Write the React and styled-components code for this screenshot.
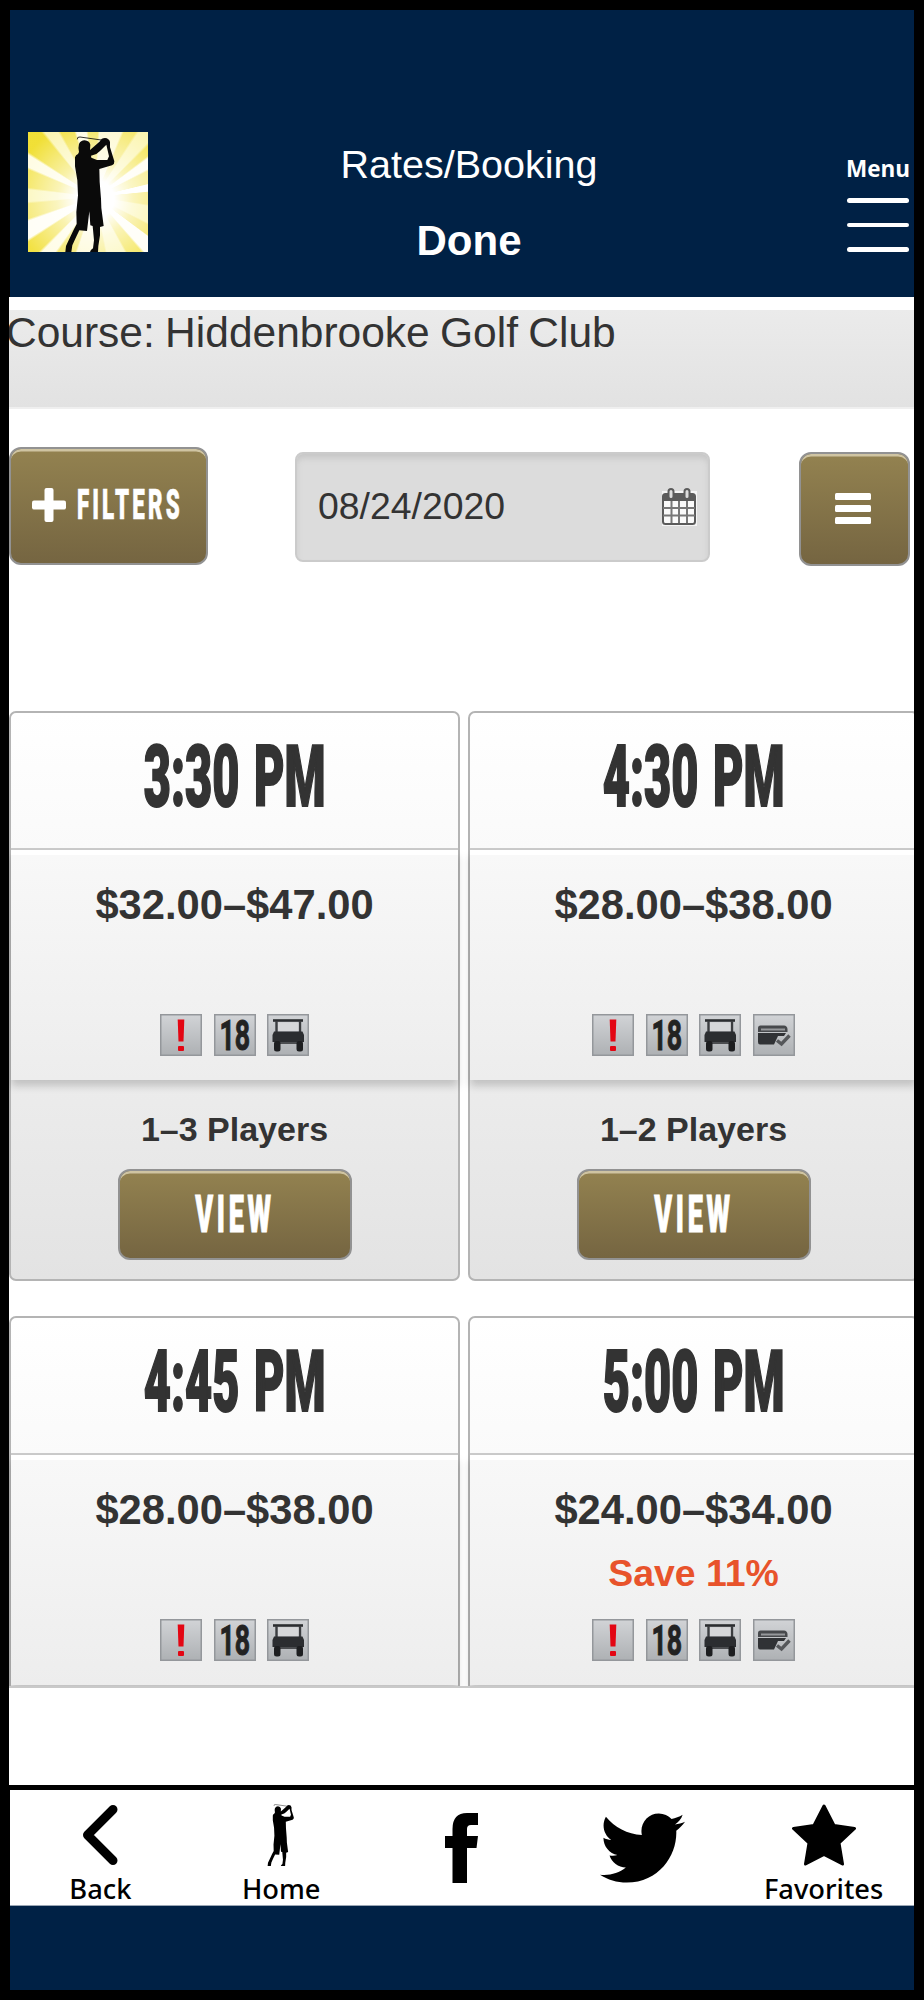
import React from 'react';
import styled, { createGlobalStyle } from 'styled-components';
import { FaTwitter } from 'react-icons/fa';

const teeTimes = [
    { id: 1, time: '3:30 PM', price: '$32.00–$47.00', players: '1–3 Players', card: false },
    { id: 2, time: '4:30 PM', price: '$28.00–$38.00', players: '1–2 Players', card: true },
    { id: 3, time: '4:45 PM', price: '$28.00–$38.00', card: false },
    { id: 4, time: '5:00 PM', price: '$24.00–$34.00', save: 'Save 11%', card: true },
];

function Golfer() {
    return (
        <g>
            <path d="M148 22 Q147 14 156 15 L220 24" fill="none" stroke="currentColor" strokeWidth="2.5" />
            <path d="M153 60 Q150 45 153 36 Q158 25 170 25 Q184 26 187 38 L186 54 L199 43 L216 28 Q220 18 231 18 Q243 19 246 30 L246 46 L259 88 Q260 96 252 100 L214 111 L215 150 L219 200 L220 228 L227 282 L216 285 L216 310 L211 342 L210 360 L186 360 Q187 354 195 349 L198 325 L194 282 L187 280 L184 238 L177 297 L154 295 L143 318 L133 340 L130 360 L112 360 L114 342 L122 325 L137 293 L146 276 L145 240 L150 190 L148 145 L141 103 L141 76 Q143 69 150 66 Z M189 71 L190 77 L207 84 L238 84 L243 73 L235 38 L216 57 L205 66 Z" fillRule="evenodd" fill="currentColor" />
        </g>
    );
}

function CalendarIcon() {
    return (
        <svg width="36" height="40" viewBox="0 0 36 40">
            <rect x="1" y="4" width="35" height="35" fill="#f5f5f5" />
            <rect x="2" y="7" width="32" height="30" rx="2.5" fill="#fafafa" stroke="#5b5b5b" strokeWidth="2" />
            <rect x="2" y="7" width="32" height="7" fill="#5b5b5b" />
            <path d="M10.5 14 V36 M18 14 V36 M26 14 V36 M2 21 H34 M2 28.5 H34" stroke="#777" strokeWidth="2" />
            <rect x="7.5" y="2" width="5" height="10" rx="2.5" fill="#ddd" stroke="#5b5b5b" strokeWidth="2" />
            <rect x="23.5" y="2" width="5" height="10" rx="2.5" fill="#ddd" stroke="#5b5b5b" strokeWidth="2" />
        </svg>
    );
}

function CartIcon() {
    return (
        <svg width="42" height="42" viewBox="0 0 42 42">
            <path d="M6 6.5 H36" stroke="#2b2d30" strokeWidth="2.6" />
            <path d="M9.5 7 V19 M33 7 V19" stroke="#3b3d40" strokeWidth="2.4" />
            <path d="M11 8.5 H31.5 V17 H11 Z" fill="#d6d7d9" />
            <path d="M7 17.5 H35.5 L37 21 V28 H5.5 V21 Z" fill="#2b2d30" />
            <path d="M9 29 H33" stroke="#4b4d50" strokeWidth="2" />
            <rect x="7" y="27" width="6.5" height="10.5" rx="2.5" fill="#1d1e20" />
            <rect x="29.5" y="27" width="6.5" height="10.5" rx="2.5" fill="#1d1e20" />
        </svg>
    );
}

function CreditIcon() {
    return (
        <svg width="42" height="42" viewBox="0 0 42 42">
            <path d="M5 18 V14 Q5 11.5 7.5 11.5 H31 Q34 11.5 34.5 15 V18 Z" fill="#47494c" />
            <path d="M8 15.5 H32" stroke="#96989b" strokeWidth="2" />
            <path d="M5 19 H33 L31 22 H25 L21 30.5 H7 Q5 30.5 5 28 Z" fill="#303235" />
            <path d="M24 26.5 L28.5 30 L36.5 21.5" fill="none" stroke="#55575a" strokeWidth="3.4" />
        </svg>
    );
}

function TeeTime({ item }) {
    return (
        <Card>
            <CardTime>
                <Condensed $size={84.5} $squeeze={0.555} $stroke={2}>{item.time}</Condensed>
            </CardTime>
            <CardRates>
                <Price>{item.price}</Price>
                <Save>{item.save}</Save>
                <Perks>
                    <Perk>
                        <svg width="42" height="42" viewBox="0 0 42 42">
                            <path d="M17.7 5.5 H24.3 L23.5 27.5 H18.5 Z" fill="#e30613" />
                            <rect x="18" y="32" width="6" height="5" rx="1" fill="#e30613" />
                        </svg>
                    </Perk>
                    <Perk><Holes>18</Holes></Perk>
                    <Perk><CartIcon /></Perk>
                    {item.card && <Perk><CreditIcon /></Perk>}
                </Perks>
            </CardRates>
            {item.players && (
                <CardFooter>
                    <Players>{item.players}</Players>
                    <GoldButton $width={234} $height={91}>
                        <Condensed $size={51} $squeeze={0.53} $spacing={7} $stroke={1}>VIEW</Condensed>
                    </GoldButton>
                </CardFooter>
            )}
        </Card>
    );
}

function App() {
    return (
        <Phone>
            <GlobalStyle />
            <Header>
                <Logo viewBox="0 0 360 360">
                    <Golfer />
                </Logo>
                <Titles>
                    <Title>Rates/Booking</Title>
                    <Done>Done</Done>
                </Titles>
                <MenuButton>
                    <span>Menu</span>
                    <MenuLine />
                    <MenuLine />
                    <MenuLine />
                </MenuButton>
            </Header>

            <Content>
                <CourseBar>Course: Hiddenbrooke Golf Club</CourseBar>
                <Toolbar>
                    <GoldButton $width={199} $height={118}>
                        <FilterLabel>
                            <svg width="34" height="34" viewBox="0 0 34 34">
                                <rect y="12.5" width="34" height="9" rx="2" fill="#fff" />
                                <rect x="12.5" width="9" height="34" rx="2" fill="#fff" />
                            </svg>
                            <FilterText>
                                <Condensed $size={43} $squeeze={0.52} $spacing={6} $stroke={0.6}>FILTERS</Condensed>
                            </FilterText>
                        </FilterLabel>
                    </GoldButton>
                    <DateField>
                        <span>08/24/2020</span>
                        <CalendarIcon />
                    </DateField>
                    <ListButton $width={111} $height={114}>
                        <svg width="36" height="32" viewBox="0 0 36 32">
                            <rect width="36" height="7" rx="1.5" fill="#fff" />
                            <rect y="12" width="36" height="7" rx="1.5" fill="#fff" />
                            <rect y="24" width="36" height="7" rx="1.5" fill="#fff" />
                        </svg>
                    </ListButton>
                </Toolbar>
                <Times>
                    {teeTimes.map((item) => (
                        <TeeTime key={item.id} item={item} />
                    ))}
                </Times>
            </Content>

            <BottomNav>
                <NavItem>
                    <svg width="40" height="62" viewBox="0 0 40 62">
                        <path d="M33 5.5 L7.5 31 L33 56.5" fill="none" stroke="#000" strokeWidth="9" strokeLinecap="round" strokeLinejoin="round" />
                    </svg>
                    <span>Back</span>
                </NavItem>
                <NavItem>
                    <svg width="28" height="62" viewBox="112 12 150 348">
                        <Golfer />
                    </svg>
                    <span>Home</span>
                </NavItem>
                <NavItem $social>
                    <svg width="33" height="70" viewBox="0 0 33 70">
                        <path d="M7.5 70 V35 H0 V23 H7.5 V16 Q7.5 0 22 0 H33 V12 H26 Q22 12 22 16 V23 H33 L31.5 35 H22 V70 Z" />
                    </svg>
                </NavItem>
                <NavItem $social>
                    <TwitterLogo viewBox="0 48 512 416" />
                </NavItem>
                <NavItem>
                    <svg width="66" height="62" viewBox="0 0 66 62">
                        <path d="M33 2 L43 21.5 L63.5 24.5 L48 39 L51.5 60 L33 50.5 L14.5 60 L18 39 L2.5 24.5 L23 21.5 Z" stroke="#000" strokeWidth="3" strokeLinejoin="round" />
                    </svg>
                    <span>Favorites</span>
                </NavItem>
            </BottomNav>
            <HomeArea />
        </Phone>
    );
}

const GlobalStyle = createGlobalStyle`
    * {
        box-sizing: border-box;
    }

    body {
        margin: 0;
        background: #000;
        font-family: "Liberation Sans", Arial, sans-serif;
        color: #333;
    }

    svg {
        display: block;
        flex: none;
    }
`;

const Phone = styled.div`
    display: flex;
    flex-direction: column;
    width: 924px;
    height: 2000px;
    padding: 10px 10px 10px 9px;
    background: #000;
`;

const Header = styled.header`
    display: flex;
    flex: none;
    height: 287px;
    margin-left: 1px;
    padding: 122px 5px 0 18px;
    background: #002145;
    color: #fff;
`;

const Logo = styled.svg`
    width: 120px;
    height: 120px;
    color: #0a0a0a;
    background:
        radial-gradient(circle at 56% 56%, #fff 0 20%, rgba(255, 255, 255, 0.6) 40%, rgba(255, 255, 255, 0.05) 85%),
        conic-gradient(from 8deg at 56% 54%,
            #fdf9cc 0 14deg, #f4e660 16deg 24deg, #fbf5ae 26deg 36deg, #f3e34a 38deg 44deg,
            #fffdf0 46deg 54deg, #f5e96e 56deg 68deg, #ffffff 69deg 76deg, #f4e455 77deg 90deg,
            #faf3a0 92deg 108deg, #f3e250 110deg 118deg, #fffef4 119deg 130deg, #f3e34a 132deg 142deg,
            #fbf6b4 144deg 160deg, #f5e96e 162deg 172deg, #fdf9cc 174deg 190deg, #f2e03a 192deg 206deg,
            #fffce0 208deg 216deg, #f2e03a 218deg 228deg, #fffef4 230deg 242deg, #f4e660 244deg 256deg,
            #fbf6b4 258deg 268deg, #f3e34a 270deg 284deg, #fffce0 286deg 294deg, #f0de2c 296deg 312deg,
            #fbf5ae 314deg 322deg, #f2e03a 324deg 334deg, #fffce0 336deg 344deg, #f3e34a 346deg 354deg, #fdf9cc 356deg);
`;

const Titles = styled.div`
    display: flex;
    flex: 1;
    flex-direction: column;
    align-items: center;
    padding: 9px 57px 0 0;
`;

const Title = styled.h1`
    margin: 0;
    font-size: 39.5px;
    font-weight: 400;
    line-height: 46px;
`;

const Done = styled.div`
    margin-top: 29px;
    font-size: 42px;
    font-weight: 700;
    line-height: 49px;
`;

const MenuButton = styled.div`
    display: flex;
    flex-direction: column;
    align-items: center;
    gap: 20px;
    width: 62px;
    padding-top: 20px;
    font-family: "Open Sans", "Noto Sans", sans-serif;
    font-size: 22.5px;
    font-weight: 700;

    span {
        height: 26px;
        line-height: 33px;
        white-space: nowrap;
    }
`;

const MenuLine = styled.i`
    flex: none;
    width: 62px;
    height: 4.5px;
    border-radius: 3px;
    background: #fff;
`;

const Content = styled.main`
    flex: none;
    height: 1488px;
    padding-top: 13px;
    overflow: hidden;
    background: #fff;
`;

const CourseBar = styled.div`
    height: 99px;
    border-bottom: 2px solid #efefef;
    background: linear-gradient(#ebebeb, #e2e2e2);
    font-size: 42.5px;
    line-height: 46px;
    text-indent: -3px;
    word-spacing: -1.5px;
    white-space: nowrap;
`;

const Toolbar = styled.div`
    display: flex;
    align-items: flex-start;
    justify-content: space-between;
    height: 302px;
    padding: 37.5px 4px 0 0;
`;

const GoldButton = styled.div`
    display: flex;
    align-items: center;
    justify-content: center;
    flex: none;
    width: ${(props) => props.$width}px;
    height: ${(props) => props.$height}px;
    border: 2px solid #929292;
    border-radius: 12px;
    background: linear-gradient(#938250, #756541);
    box-shadow: inset 0 3px 0 -0.5px #cfc4a2;
    color: #fff;
`;

const ListButton = styled(GoldButton)`
    margin-top: 5px;
    padding-right: 4px;
`;

const FilterLabel = styled.div`
    display: flex;
    align-items: center;
    gap: 12px;
    padding: 0 3px 2px 0;
`;

const FilterText = styled.div`
    display: flex;
    justify-content: center;
    width: 104px;
`;

/* tall narrow display lettering */
const Condensed = styled.span`
    flex: none;
    font-family: Roboto, "Liberation Sans", sans-serif;
    font-size: ${(props) => props.$size}px;
    font-weight: 900;
    letter-spacing: ${(props) => props.$spacing || 0}px;
    line-height: 1;
    white-space: nowrap;
    -webkit-text-stroke: ${(props) => props.$stroke}px currentColor;
    transform: scaleX(${(props) => props.$squeeze});
`;

const DateField = styled.div`
    display: flex;
    align-items: center;
    justify-content: space-between;
    width: 415px;
    height: 110px;
    margin: 5px 2px 0 0;
    padding: 0 11px 0 21px;
    border: 2px solid #cbcbcb;
    border-radius: 8px;
    background: #dcdcdc;
    box-shadow: inset 0 5px 6px -1px #c6c6c6;
    font-size: 37.4px;
`;

const Times = styled.section`
    display: grid;
    grid-template-columns: 451px 451px;
    gap: 35px 8px;
    height: 977px;
    overflow: hidden;
    border-bottom: 2px solid #c9c9c9;
`;

const Card = styled.article`
    height: 570px;
    border: 2px solid #b4b4b4;
    border-radius: 7px;
    background: linear-gradient(#fff, #fafafa 136px, #ececec 366px, #e3e3e3);
`;

const CardTime = styled.div`
    display: flex;
    align-items: center;
    justify-content: center;
    height: 137px;
    padding-bottom: 5px;
    border-bottom: 2px solid #cbcbcb;
    color: #333;
    word-spacing: 5px;
`;

const CardRates = styled.div`
    display: flex;
    flex-direction: column;
    align-items: center;
    height: 230px;
    border-top: 5px solid #fff;
    background: linear-gradient(#f8f8f8, #ededed);
    box-shadow: 0 6px 8px rgba(0, 0, 0, 0.18);
    font-weight: 700;
`;

const Price = styled.div`
    margin-top: 26px;
    font-size: 41.7px;
    line-height: 48px;
`;

const Save = styled.div`
    height: 44px;
    margin-top: 18px;
    color: #e8532b;
    font-size: 37.4px;
    line-height: 42px;
`;

const Perks = styled.div`
    display: flex;
    gap: 11.7px;
    margin-top: 22.5px;
`;

const Perk = styled.div`
    display: flex;
    align-items: center;
    justify-content: center;
    width: 42px;
    height: 42px;
    background: linear-gradient(#d2d4d7, #adb0b3);
    box-shadow: inset 0 0 0 1.5px #94979b;
`;

const Holes = styled.span`
    flex: none;
    color: #222;
    font-family: Roboto, sans-serif;
    font-size: 43px;
    font-weight: 700;
    line-height: 42px;
    -webkit-text-stroke: 1px #222;
    transform: scaleX(0.62);
`;

const CardFooter = styled.div`
    display: flex;
    flex-direction: column;
    align-items: center;
    padding-top: 30px;
`;

const Players = styled.div`
    margin-bottom: 20px;
    font-size: 34px;
    font-weight: 700;
    line-height: 39px;
`;

const BottomNav = styled.nav`
    display: grid;
    grid-template-columns: repeat(5, 1fr);
    flex: none;
    height: 121px;
    margin-left: 1px;
    border-top: 5px solid #000;
    border-bottom: 1px solid #9aa6b4;
    background: #fff;
`;

const NavItem = styled.div`
    display: flex;
    flex-direction: column;
    align-items: center;
    padding-top: ${(props) => (props.$social ? 23 : 14)}px;
    color: #000;
    font-family: "Noto Sans", "Open Sans", sans-serif;
    font-size: 27.3px;
    font-weight: 500;

    span {
        margin-top: 4px;
        line-height: 38px;
    }
`;

const TwitterLogo = styled(FaTwitter)`
    width: 85px;
    height: 70px;
`;

const HomeArea = styled.footer`
    flex: 1;
    margin-left: 1px;
    background: #002145;
`;

export default App;
